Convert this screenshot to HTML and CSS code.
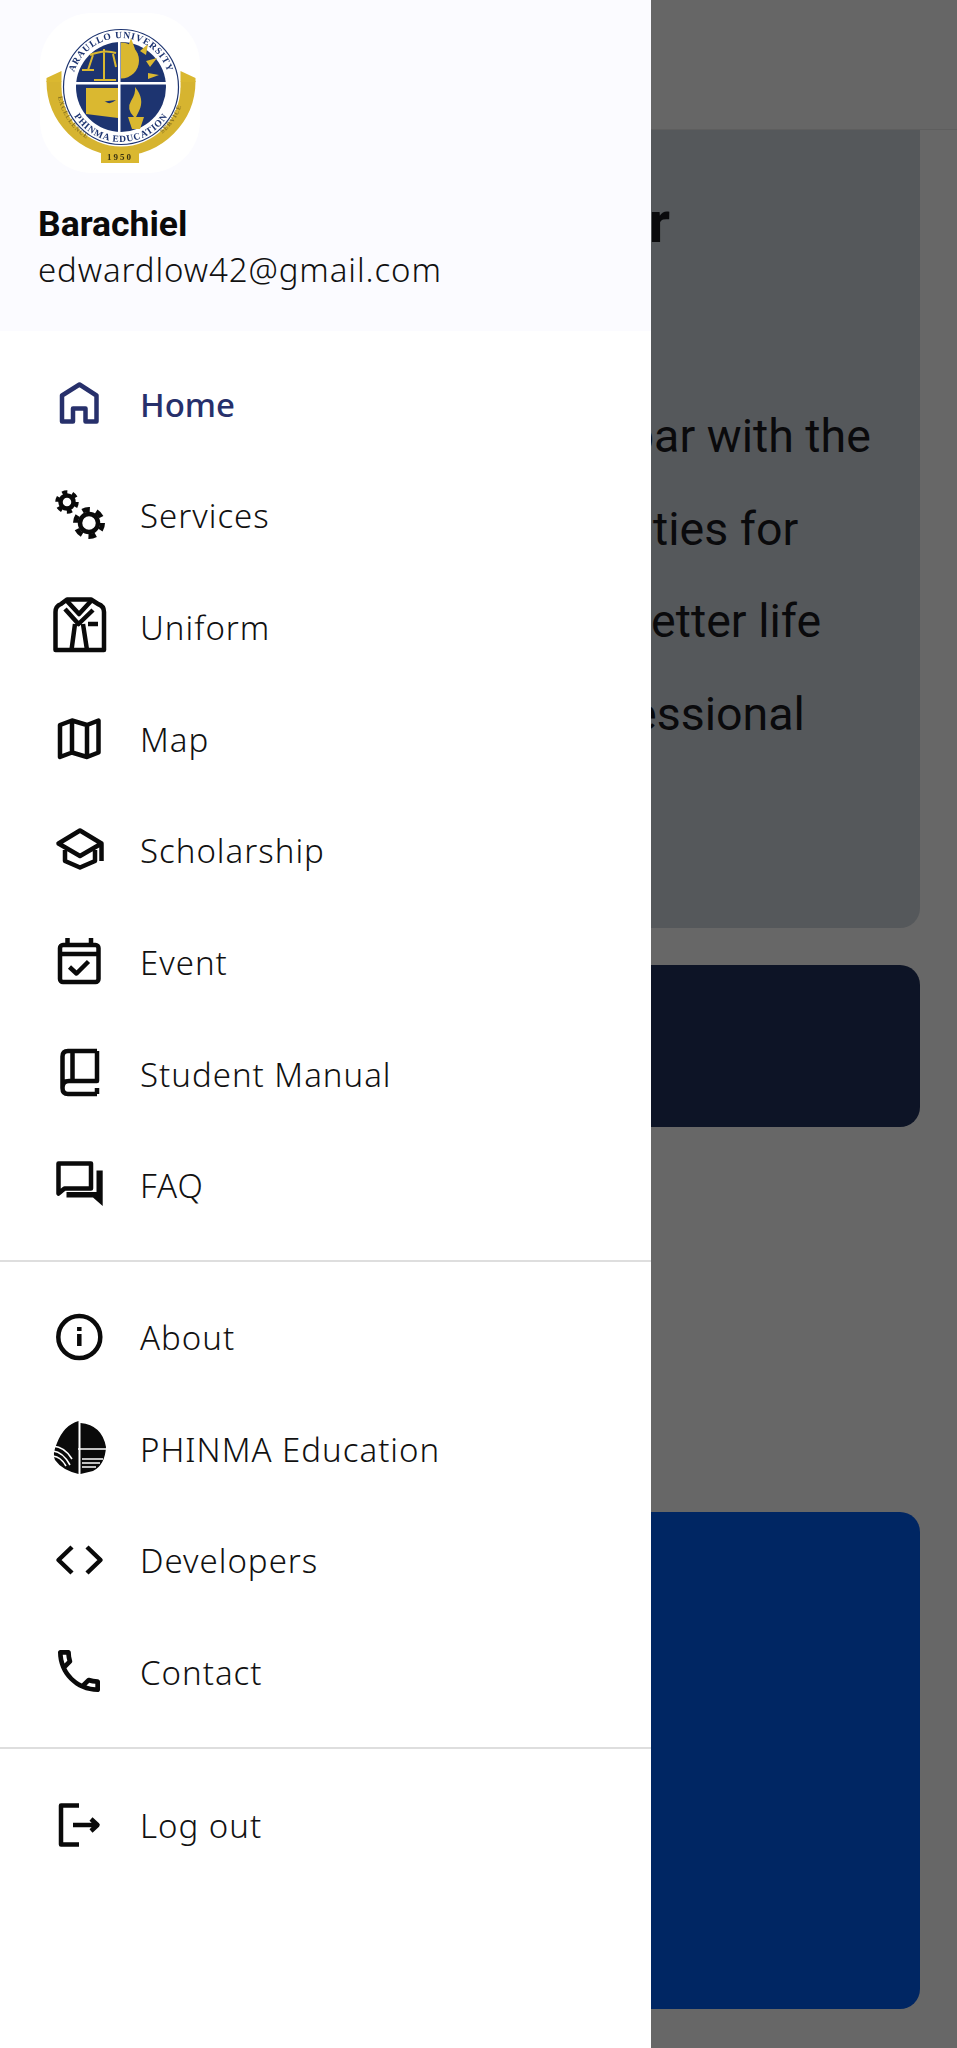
FILE: index.html
```html
<!DOCTYPE html>
<html lang="en">
<head>
<meta charset="utf-8">
<title>Menu</title>
<link rel="stylesheet" href="styles.css">
</head>
<body>
<div class="screen">
  <main class="page">
    <div class="appbar"></div>
    <section class="card-info">
      <h2 class="info-title">Our Vision for</h2>
      <p class="line line-1">par with the</p>
      <p class="line line-2">ties for</p>
      <p class="line line-3">better life</p>
      <p class="line line-4">essional</p>
    </section>
    <div class="card-dark"></div>
    <div class="card-blue"></div>
  </main>

  <aside class="drawer">
    <header class="profile">
      <div class="logo">
        <svg viewBox="0 0 160 160" width="160" height="160">
          <defs>
            <path id="arcTop" d="M32 74a49 49 0 0 1 98 0"/>
            <path id="arcBottom" d="M26 74a55 55 0 0 0 110 0"/>
            <path id="arcRibbon" d="M17 72a64 64 0 0 0 128 0"/>
          </defs>
          <path d="M14 68a67 67 0 0 0 134 0" class="ribbon"/>
          <path d="M6.500 69L21.500 69V58L6.500 65ZM155.500 69L140.500 69V58L155.500 65Z" class="gold"/>
          <rect x="61" y="137" width="38" height="13" class="gold"/>
          <circle cx="81" cy="74" r="59.500" class="seal-white"/>
          <circle cx="81" cy="74" r="57.500" class="seal-ring"/>
          <circle cx="81" cy="74" r="45" class="blue"/>
          <path d="M36 69h90v2.500h-90zM78 29h2.500v90h-2.500z" class="seal-white"/>
          <path d="M50 42q14 -6 26 -2M64 36v30M53 42l-5 15M73 41l3 13M42 57h12M54 67h22" class="gold-line"/>
          <path d="M81 67.500v-36a18 18 0 0 1 0 36z" class="gold" transform="translate(0 -2)"/>
          <path d="M88 34l3 -9 4 11zM100 38l8 -7 -2 11zM106 48l11 -3 -7 9zM108 60l11 2 -11 4z" class="gold"/>
          <path d="M46 75h32v30l-32 -4zM52 90q10 -4 14 -1t10 -2" class="gold"/>
          <path d="M95 74q10 12 4 24l-3 6h-2q-8 -8 -3 -16t4 -14zM88 104h16l-4 12h-8z" class="gold"/>
          <text class="seal-text"><textPath href="#arcTop" startOffset="50%">ARAULLO UNIVERSITY</textPath></text>
          <text class="seal-text"><textPath href="#arcBottom" startOffset="50%">PHINMA EDUCATION</textPath></text>
          <text class="ribbon-text"><textPath href="#arcRibbon" startOffset="19%">EXCELLENCE</textPath></text>
          <text class="ribbon-text"><textPath href="#arcRibbon" startOffset="81%">SERVICE</textPath></text>
          <text x="80" y="147" class="year">1950</text>
        </svg>
      </div>
      <div class="name">Barachiel</div>
      <div class="email">edwardlow42@gmail.com</div>
    </header>

    <nav class="group group-first">
      <a class="item item-active">
        <svg class="icon" viewBox="0 0 60 60"><path class="st" d="M12 47.500V21.500L29.500 10.500 46.500 21.500V47.500H35.500V34.500H23V47.500Z"/></svg>
        <span>Home</span>
      </a>
      <a class="item">
        <svg class="icon" viewBox="0 0 60 60">
          <circle class="st" cx="17" cy="17" r="6.500" stroke-width="5"/>
          <circle class="teeth" cx="17" cy="17" r="9.500" stroke-width="4.500" stroke-dasharray="5 4.950"/>
          <circle class="st" cx="39" cy="38" r="9" stroke-width="7"/>
          <circle class="teeth" cx="39" cy="38" r="13.500" stroke-width="5" stroke-dasharray="7.500 6.640"/>
        </svg>
        <span>Services</span>
      </a>
      <a class="item">
        <svg class="icon" viewBox="0 0 60 60">
          <path class="st" d="M5.500 53V15Q5.500 9 11 7L17 2.500H41L48 7Q54 9 54 15V53Z" stroke-linejoin="miter"/>
          <path class="st" stroke-width="3.500" d="M15 12L28.500 27 43 13M17 4L29 17 41 4M25 27L21.500 53M33 27L37 53M38 27H48"/>
        </svg>
        <span>Uniform</span>
      </a>
      <a class="item">
        <svg class="icon" viewBox="0 0 60 60"><path class="st" d="M10 16L22 11.500 37 16 48.500 11.500V43.500L37 48 22 43.500 10 48ZM22 11.500V43.500M37 16V48"/></svg>
        <span>Map</span>
      </a>
      <a class="item">
        <svg class="icon" viewBox="0 0 60 60">
          <path class="st" d="M30 10.500L8.500 23.500 30 36 51.500 23.500ZM15 30V41L30 47.500 45 41V30M51.500 24V41"/>
        </svg>
        <span>Scholarship</span>
      </a>
      <a class="item">
        <svg class="icon" viewBox="0 0 60 60">
          <rect class="st" x="10" y="13" width="38.500" height="37" rx="3"/>
          <path class="st" d="M10 22H48M17.500 6V12M41 6V12M19.500 35L26.500 41.500 38.500 29.500"/>
        </svg>
        <span>Event</span>
      </a>
      <a class="item">
        <svg class="icon" viewBox="0 0 60 60">
          <path class="st" d="M47 7H18Q12.500 7 12.500 12.500V44Q12.500 50 18 50H47M47 7V37H19Q12.500 37 12.500 43.500M22.500 7V37M47 44V50"/>
        </svg>
        <span>Student Manual</span>
      </a>
      <a class="item">
        <svg class="icon" viewBox="0 0 60 60">
          <path class="st" d="M8.500 8.500H41V33.500H14.500L8.500 38.500Z"/>
          <path class="fl" d="M44 15.500H52.700V51L43 42.500H16.500V37H46.500V15.500Z"/>
        </svg>
        <span>FAQ</span>
      </a>
    </nav>

    <nav class="group group-mid">
      <a class="item">
        <svg class="icon" viewBox="0 0 60 60">
          <circle class="st" cx="29.300" cy="30" r="21"/>
          <path class="st" stroke-linejoin="miter" d="M29.300 27V39M29.300 20V24"/>
        </svg>
        <span>About</span>
      </a>
      <a class="item">
        <svg class="icon" viewBox="0 0 60 60">
          <path class="fl" d="M28.500 2V55Q12 51 5 41 2 35 7 24 14 6 28.500 2ZM30.500 4Q52 6 56 28 55 46 43 52L30.500 55Z"/>
          <path class="cut" d="M28 30H56M3 32Q13 33 20 46M3 37Q11 38 16 47M3 27Q15 28 22 40M32 40H53M32 44H50M32 48H46"/>
        </svg>
        <span>PHINMA Education</span>
      </a>
      <a class="item">
        <svg class="icon" viewBox="0 0 60 60">
          <path class="st" stroke-linejoin="miter" d="M22 17L8.500 30 22 43M37 17L50.500 30 37 43"/>
        </svg>
        <span>Developers</span>
      </a>
      <a class="item">
        <svg class="icon" viewBox="0 0 60 60">
          <path class="fl" transform="translate(1 1) scale(2.333)" d="M6.540 5c.06.89.21 1.760.45 2.590l-1.200 1.200c-.41-1.200-.67-2.470-.76-3.790h1.510m9.860 12.020c.85.24 1.720.39 2.600.45v1.490c-1.320-.09-2.590-.35-3.800-.75l1.200-1.190M7.500 3H4c-.55 0-1 .45-1 1 0 9.390 7.610 17 17 17 .55 0 1-.45 1-1v-3.490c0-.55-.45-1-1-1-1.240 0-2.450-.2-3.570-.57-.1-.04-.21-.05-.31-.05-.26 0-.51.1-.71.29l-2.200 2.200c-2.830-1.450-5.150-3.760-6.590-6.590l2.200-2.200c.28-.28.36-.67.25-1.020C8.700 6.450 8.500 5.250 8.500 4c0-.55-.45-1-1-1z"/>
        </svg>
        <span>Contact</span>
      </a>
    </nav>

    <nav class="group group-last">
      <a class="item">
        <svg class="icon" viewBox="0 0 60 60">
          <path class="st" d="M29 10.500H11V49.500H29"/>
          <path class="st" stroke-linejoin="miter" d="M23 30H47M41 24L47.500 30 41 36"/>
        </svg>
        <span>Log out</span>
      </a>
    </nav>
  </aside>
</div>
</body>
</html>
```
FILE: styles.css
```css
* { box-sizing: border-box; }
html, body { margin: 0; padding: 0; }
body { width: 957px; height: 2048px; overflow: hidden; font-family: "Noto Sans", sans-serif; }

.screen { position: relative; width: 957px; height: 2048px; background: #676767; overflow: hidden; }

.page { display: flex; flex-direction: column; height: 100%; }
.appbar { height: 130px; flex: none; background: #666; border-bottom: 1px solid #5e5e5e; }
.card-info {
  height: 798px; flex: none; margin: 0 37px 0 37px; background: #55585b;
  border-radius: 0 0 20px 20px; color: #0a0a0c; font-family: Roboto, sans-serif;
  padding-top: 60px; overflow: hidden;
}
.info-title { width: 633px; margin: 0 0 136px; font-size: 58px; line-height: 64px; font-weight: 700; text-align: right; white-space: nowrap; }
.line { margin: 0; font-size: 46.500px; line-height: 92.600px; white-space: nowrap; }
.line-1 { padding-left: 591px; }
.line-2 { padding-left: 616px; }
.line-3 { padding-left: 588px; }
.line-4 { padding-left: 595px; }
.card-dark { height: 162px; flex: none; margin: 37px 37px 0; border-radius: 20px; background: #0d1426; }
.card-blue { height: 497px; flex: none; margin: 385px 37px 0; border-radius: 20px; background: #002663; }

.drawer {
  position: absolute; left: 0; top: 0; bottom: 0; width: 651px; background: #fff;
  display: flex; flex-direction: column;
}
.profile { height: 331px; flex: none; background: #fbfbff; padding: 13px 0 0 38px; }
.logo { width: 160px; height: 160px; margin-left: 2px; background: #fff; border-radius: 52px; }
.logo svg { display: block; filter: blur(.4px); }
.name { margin-top: 30px; font-family: Roboto, sans-serif; font-weight: 700; font-size: 35.500px; line-height: 42px; color: #0a0a0a; }
.email { margin-top: 1px; font-size: 33px; font-weight: 300; line-height: 48px; letter-spacing: .9px; color: #111; }

.group { padding: 21px 0 19px; border-bottom: 2px solid #dedede; display: flex; flex-direction: column; }
.group-first { padding-top: 17px; }
.group-mid { padding-top: 19px; }
.group-last { border-bottom: 0; padding-top: 20px; }
.item { height: 111.670px; flex: none; display: flex; align-items: center; gap: 30px; padding-left: 50px; font-size: 33px; font-weight: 300; letter-spacing: 1px; color: #111; }
.item span { padding-top: 1px; }
.item-active { color: #27306b; font-weight: 500; letter-spacing: 0; }
.icon { width: 60px; height: 60px; flex: none; display: block; }

.st { fill: none; stroke: currentColor; stroke-width: 4.500; stroke-linejoin: round; }
.item svg .st { stroke: #0a0a0a; }
.item-active svg .st { stroke: #27306b; }
.teeth { fill: none; stroke: #0a0a0a; }
.fl { fill: #0a0a0a; }
.cut { fill: none; stroke: #fff; stroke-width: 1.600; }

.ribbon { fill: none; stroke: #d6b430; stroke-width: 15; }
.gold { fill: #dab830; }
.gold-line { fill: none; stroke: #dab830; stroke-width: 2; }
.blue { fill: #1d3470; }
.seal-white { fill: #fff; }
.seal-ring { fill: none; stroke: #1d3470; stroke-width: 1.200; }
.seal-text { font-family: "Liberation Serif", serif; font-size: 9.500px; font-weight: 700; fill: #1d3470; text-anchor: middle; letter-spacing: .8px; }
.ribbon-text { font-family: "Liberation Serif", serif; font-size: 6.500px; font-weight: 700; fill: #8a7420; text-anchor: middle; letter-spacing: .8px; }
.year { font-family: "Liberation Serif", serif; font-size: 9px; font-weight: 700; fill: #3a3210; text-anchor: middle; letter-spacing: 2px; }
```
